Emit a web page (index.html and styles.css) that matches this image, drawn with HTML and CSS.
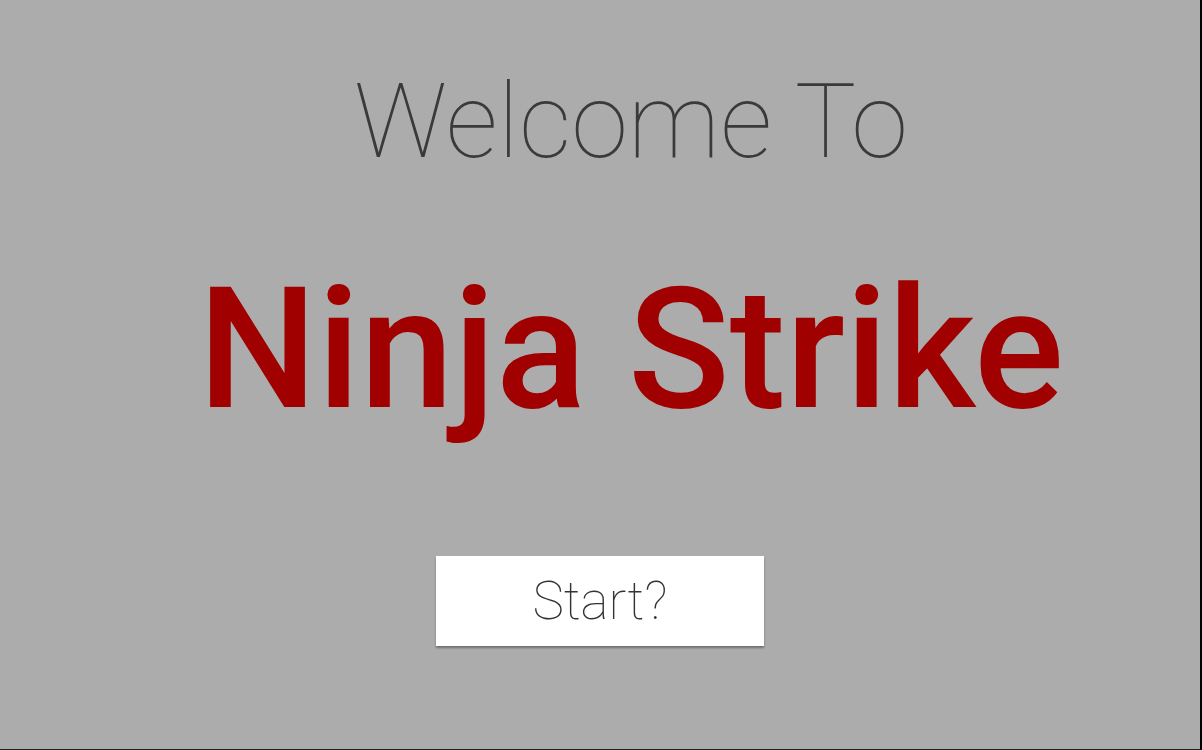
FILE: index.html
```html
<!DOCTYPE html>
<html lang="en">
<head>
    <meta charset="UTF-8">
    <meta name="viewport" content="width=device-width, initial-scale=1.0">
    <title>Ninja Strike</title>
    <link rel="stylesheet" href="styles.css">
</head>
<body>
    <div class="screen">
        <h2 class="welcome">Welcome To</h2>
        <h1 class="title">Ninja Strike</h1>
        <button type="button" class="start-button">Start?</button>
    </div>
</body>
</html>
```

FILE: styles.css
```css
body {
    font-family: Roboto, "Liberation Sans", sans-serif;
    background-color: #acacac;
    margin: 0;
    padding: 0;
}

.screen {
    height: 750px;
    box-sizing: border-box;
    border-right: 2px solid #000;
    border-bottom: 1px solid #222;
    display: flex;
    flex-direction: column;
    align-items: center;
    padding-top: 70px;
}

.welcome {
    margin: 0;
    padding-left: 62px;
    font-size: 103px;
    font-weight: 100;
    line-height: 1;
    color: #3a3a3a;
}

.title {
    margin: 93px 0 0;
    padding-left: 62px;
    font-size: 168px;
    font-weight: 500;
    line-height: 1;
    color: #a00000;
}

.start-button {
    margin-top: 122px;
    width: 328px;
    height: 90px;
    background-color: #fff;
    border: none;
    border-radius: 0;
    font-family: Roboto, "Liberation Sans", sans-serif;
    font-size: 53px;
    font-weight: 100;
    line-height: 90px;
    color: #333;
    padding: 0;
    box-shadow: 0 2px 2px rgba(0, 0, 0, 0.35);
    cursor: pointer;
}
```
